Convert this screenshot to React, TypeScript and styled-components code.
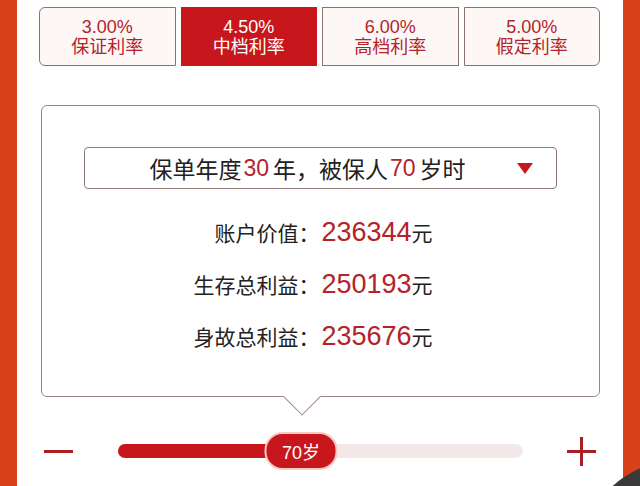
import styled, { createGlobalStyle } from "styled-components";

const GlobalStyle = createGlobalStyle`
  html, body {
    margin: 0;
    padding: 0;
    background: #ffffff;
  }
  body {
    font-family: "Liberation Sans", "Noto Sans CJK SC", sans-serif;
  }
`;

const RED = "#c8161d";
const TEXT_RED = "#b3232b";

const Page = styled.div`
  position: relative;
  width: 640px;
  height: 486px;
  display: flex;
  overflow: hidden;
  background: #ffffff;
`;

const SideBar = styled.div`
  width: 17px;
  flex: none;
  background: #d9411b;
`;

const Main = styled.main`
  flex: 1;
  display: flex;
  flex-direction: column;
  padding: 7px 23px 0 22px;
`;

const RateTabs = styled.div`
  display: grid;
  grid-template-columns: repeat(4, 1fr);
  gap: 5px;
  height: 59px;
`;

const RateTab = styled.button<{ $active?: boolean }>`
  display: flex;
  flex-direction: column;
  align-items: center;
  justify-content: center;
  padding: 0;
  margin: 0;
  border: 1px solid ${(p) => (p.$active ? RED : "#8d7070")};
  background: ${(p) => (p.$active ? RED : "#fdf8f6")};
  color: ${(p) => (p.$active ? "#ffffff" : TEXT_RED)};
  font-family: inherit;
  font-size: 18px;
  line-height: 20px;
  border-radius: 0;

  &:first-child {
    border-radius: 6px 0 0 6px;
  }
  &:last-child {
    border-radius: 0 6px 6px 0;
  }
`;

const Card = styled.section`
  position: relative;
  margin: 39px 0 0 2px;
  border: 1px solid #9c8585;
  border-radius: 6px;
  padding: 41px 42px 34px;
  background: #ffffff;
`;

const Pointer = styled.span`
  position: absolute;
  bottom: -14px;
  width: 26px;
  height: 26px;
  background: #ffffff;
  border-right: 1px solid #9c8585;
  border-bottom: 1px solid #9c8585;
  transform: translateX(-50%) rotate(45deg);
`;

const Dropdown = styled.div`
  position: relative;
  height: 40px;
  border: 1px solid #8f7a7a;
  border-radius: 4px;
  display: flex;
  align-items: center;
  justify-content: center;
  padding-right: 26px;
  font-size: 23px;
  color: #222222;
`;

const Num = styled.span`
  color: ${TEXT_RED};
  margin: 0 4px 0 2px;
`;

const Caret = styled.span`
  position: absolute;
  right: 23px;
  top: 15px;
  width: 0;
  height: 0;
  border-left: 8px solid transparent;
  border-right: 8px solid transparent;
  border-top: 11px solid ${RED};
`;

const Rows = styled.div`
  margin-top: 17px;
  display: grid;
  grid-template-columns: 1fr 1fr;
  grid-auto-rows: 52px;
  align-items: center;
`;

const Label = styled.span`
  text-align: right;
  font-size: 21px;
  color: #222222;
  padding-right: 1px;
`;

const Value = styled.span`
  font-size: 27px;
  color: ${TEXT_RED};
  padding-left: 1px;
`;

const Unit = styled.span`
  font-size: 21px;
  color: #222222;
`;

const SliderRow = styled.div`
  margin-top: 34px;
  height: 40px;
  display: flex;
  align-items: center;
  padding: 0 4px 0 5px;
`;

const StepButton = styled.span`
  width: 29px;
  height: 29px;
  flex: none;
  display: flex;
  align-items: center;
  justify-content: center;
`;

const Track = styled.div`
  position: relative;
  flex: 1;
  height: 14px;
  margin: 0 44px 0 45px;
  border-radius: 7px;
  background: #f3e9e8;
`;

const Fill = styled.div`
  height: 100%;
  border-radius: 7px;
  background: ${RED};
`;

const Thumb = styled.div`
  position: absolute;
  top: 50%;
  width: 69px;
  height: 34px;
  transform: translate(-50%, -50%);
  border-radius: 18px;
  background: ${RED};
  border: 2px solid #f9c9c2;
  display: flex;
  align-items: center;
  justify-content: center;
  color: #ffffff;
  font-size: 18px;
`;

const Corner = styled.div`
  position: absolute;
  right: -140px;
  bottom: -174px;
  width: 200px;
  height: 200px;
  border-radius: 50%;
  background: #3a3a3a;
`;

const RATES = [
  { rate: "3.00%", name: "保证利率" },
  { rate: "4.50%", name: "中档利率" },
  { rate: "6.00%", name: "高档利率" },
  { rate: "5.00%", name: "假定利率" },
];

const RESULTS = [
  { label: "账户价值：", value: "236344" },
  { label: "生存总利益：", value: "250193" },
  { label: "身故总利益：", value: "235676" },
];

// slider geometry
const TRACK_LEFT = 118;
const TRACK_WIDTH = 405;
const CARD_LEFT = 41;

export default function App() {
  const active = 1;
  const age = 70;
  const year = 30;
  const pct = 0.452;
  const pointerX = TRACK_LEFT + pct * TRACK_WIDTH - CARD_LEFT;

  return (
    <>
      <GlobalStyle />
      <Page>
        <SideBar />
        <Main>
          <RateTabs>
            {RATES.map((r, i) => (
              <RateTab key={r.name} $active={i === active}>
                <span>{r.rate}</span>
                <span>{r.name}</span>
              </RateTab>
            ))}
          </RateTabs>

          <Card>
            <Dropdown>
              保单年度<Num>{year}</Num>年，被保人<Num>{age}</Num>岁时
              <Caret />
            </Dropdown>
            <Rows>
              {RESULTS.flatMap((r) => [
                <Label key={r.label}>{r.label}</Label>,
                <Value key={r.value}>
                  {r.value}
                  <Unit>元</Unit>
                </Value>,
              ])}
            </Rows>
            <Pointer style={{ left: pointerX }} />
          </Card>

          <SliderRow>
            <StepButton>
              <svg width="29" height="29" viewBox="0 0 29 29">
                <line x1="0" y1="14.5" x2="29" y2="14.5" stroke="#a81e24" strokeWidth="3" />
              </svg>
            </StepButton>
            <Track>
              <Fill style={{ width: `${pct * 100}%` }} />
              <Thumb style={{ left: `${pct * 100}%` }}>{age}岁</Thumb>
            </Track>
            <StepButton>
              <svg width="29" height="29" viewBox="0 0 29 29">
                <line x1="0" y1="14.5" x2="29" y2="14.5" stroke="#a81e24" strokeWidth="3" />
                <line x1="14.5" y1="0" x2="14.5" y2="29" stroke="#a81e24" strokeWidth="3" />
              </svg>
            </StepButton>
          </SliderRow>
        </Main>
        <SideBar />
        <Corner />
      </Page>
    </>
  );
}
